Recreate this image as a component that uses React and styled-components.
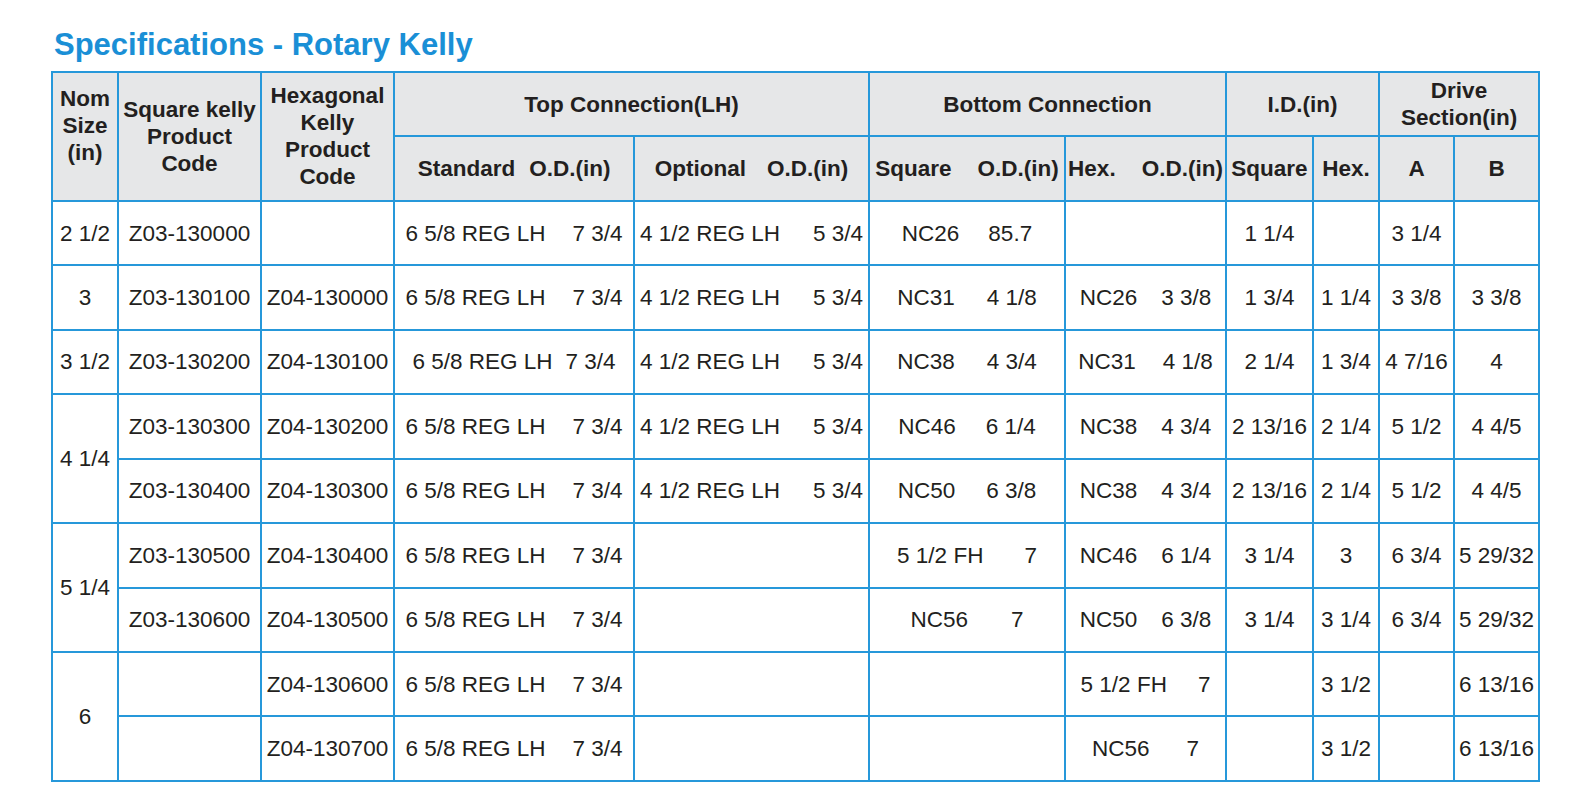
import React from 'react';
import styled, { createGlobalStyle } from 'styled-components';

const GlobalStyle = createGlobalStyle`
  body {
    margin: 0;
    background: #ffffff;
    font-family: "Liberation Sans", Arial, sans-serif;
  }
`;

const rows = [
  { nom: '2 1/2', nomSpan: 1, sq: 'Z03-130000', hex: '', std: ['6 5/8 REG LH', '7 3/4', 27], opt: ['4 1/2 REG LH', '5 3/4', 33], bsq: ['NC26', '85.7', 29], bhex: null, idSq: '1 1/4', idHex: '', a: '3 1/4', b: '' },
  { nom: '3', nomSpan: 1, sq: 'Z03-130100', hex: 'Z04-130000', std: ['6 5/8 REG LH', '7 3/4', 27], opt: ['4 1/2 REG LH', '5 3/4', 33], bsq: ['NC31', '4 1/8', 32], bhex: ['NC26', '3 3/8', 24], idSq: '1 3/4', idHex: '1 1/4', a: '3 3/8', b: '3 3/8' },
  { nom: '3 1/2', nomSpan: 1, sq: 'Z03-130200', hex: 'Z04-130100', std: ['6 5/8 REG LH', '7 3/4', 13], opt: ['4 1/2 REG LH', '5 3/4', 33], bsq: ['NC38', '4 3/4', 32], bhex: ['NC31', '4 1/8', 27], idSq: '2 1/4', idHex: '1 3/4', a: '4 7/16', b: '4' },
  { nom: '4 1/4', nomSpan: 2, sq: 'Z03-130300', hex: 'Z04-130200', std: ['6 5/8 REG LH', '7 3/4', 27], opt: ['4 1/2 REG LH', '5 3/4', 33], bsq: ['NC46', '6 1/4', 30], bhex: ['NC38', '4 3/4', 24], idSq: '2 13/16', idHex: '2 1/4', a: '5 1/2', b: '4 4/5' },
  { sq: 'Z03-130400', hex: 'Z04-130300', std: ['6 5/8 REG LH', '7 3/4', 27], opt: ['4 1/2 REG LH', '5 3/4', 33], bsq: ['NC50', '6 3/8', 31], bhex: ['NC38', '4 3/4', 24], idSq: '2 13/16', idHex: '2 1/4', a: '5 1/2', b: '4 4/5' },
  { nom: '5 1/4', nomSpan: 2, sq: 'Z03-130500', hex: 'Z04-130400', std: ['6 5/8 REG LH', '7 3/4', 27], opt: null, bsq: ['5 1/2 FH', '7', 41], bhex: ['NC46', '6 1/4', 24], idSq: '3 1/4', idHex: '3', a: '6 3/4', b: '5 29/32' },
  { sq: 'Z03-130600', hex: 'Z04-130500', std: ['6 5/8 REG LH', '7 3/4', 27], opt: null, bsq: ['NC56', '7', 43], bhex: ['NC50', '6 3/8', 24], idSq: '3 1/4', idHex: '3 1/4', a: '6 3/4', b: '5 29/32' },
  { nom: '6', nomSpan: 2, sq: '', hex: 'Z04-130600', std: ['6 5/8 REG LH', '7 3/4', 27], opt: null, bsq: null, bhex: ['5 1/2 FH', '7', 31], idSq: '', idHex: '3 1/2', a: '', b: '6 13/16' },
  { sq: '', hex: 'Z04-130700', std: ['6 5/8 REG LH', '7 3/4', 27], opt: null, bsq: null, bhex: ['NC56', '7', 37], idSq: '', idHex: '3 1/2', a: '', b: '6 13/16' },
];

const widths = [66, 143, 133, 240, 235, 196, 161, 87, 66, 75, 85];

function PairCell({ pair }) {
  if (!pair) return <Cell />;
  return (
    <Cell>
      <Pair gap={pair[2]}>
        <span>{pair[0]}</span>
        <span>{pair[1]}</span>
      </Pair>
    </Cell>
  );
}

function App() {
  return (
    <Page>
      <GlobalStyle />
      <Title>Specifications - Rotary Kelly</Title>
      <Table>
        <colgroup>
          {widths.map((w, i) => <col key={i} style={{ width: w }} />)}
        </colgroup>
        <thead>
          <Row>
            <Head rowSpan={2} lift>Nom<br />Size<br />(in)</Head>
            <Head rowSpan={2}>Square kelly<br />Product<br />Code</Head>
            <Head rowSpan={2}>Hexagonal<br />Kelly<br />Product<br />Code</Head>
            <Head colSpan={2}>Top Connection(LH)</Head>
            <Head colSpan={2}>Bottom Connection</Head>
            <Head colSpan={2}>I.D.(in)</Head>
            <Head colSpan={2}>Drive<br />Section(in)</Head>
          </Row>
          <Row>
            <Head><Pair gap={14}><span>Standard</span><span>O.D.(in)</span></Pair></Head>
            <Head><Pair gap={21}><span>Optional</span><span>O.D.(in)</span></Pair></Head>
            <Head><Pair gap={26}><span>Square</span><span>O.D.(in)</span></Pair></Head>
            <Head><Pair gap={26}><span>Hex.</span><span>O.D.(in)</span></Pair></Head>
            <Head>Square</Head>
            <Head>Hex.</Head>
            <Head>A</Head>
            <Head>B</Head>
          </Row>
        </thead>
        <tbody>
          {rows.map((r, i) => (
            <Row key={i}>
              {r.nom && <Cell rowSpan={r.nomSpan}>{r.nom}</Cell>}
              <Cell>{r.sq}</Cell>
              <Cell>{r.hex}</Cell>
              <PairCell pair={r.std} />
              <PairCell pair={r.opt} />
              <PairCell pair={r.bsq} />
              <PairCell pair={r.bhex} />
              <Cell>{r.idSq}</Cell>
              <Cell>{r.idHex}</Cell>
              <Cell>{r.a}</Cell>
              <Cell>{r.b}</Cell>
            </Row>
          ))}
        </tbody>
      </Table>
    </Page>
  );
}

export default App;

const Page = styled.div`
  padding: 29px 0 0 51px;
`;

const Title = styled.h1`
  margin: 0 0 11px 3px;
  font-size: 31px;
  line-height: 31px;
  font-weight: bold;
  color: #1a8fd6;
`;

const Table = styled.table`
  border-collapse: collapse;
  table-layout: fixed;
  width: 1489px;
  color: #231f20;
`;

const Row = styled.tr`
  height: 64.45px;
`;

const Head = styled.th`
  border: 2px solid #2698da;
  background: #e6e7e8;
  padding: 0 0 ${p => (p.lift ? '22px' : '0')} 0;
  font-size: 22.5px;
  line-height: 27px;
  font-weight: bold;
  text-align: center;
  vertical-align: middle;
  white-space: nowrap;
`;

const Cell = styled.td`
  border: 2px solid #2698da;
  padding: 0;
  font-size: 22.5px;
  line-height: 27px;
  text-align: center;
  vertical-align: middle;
  white-space: nowrap;
`;

const Pair = styled.span`
  display: inline-flex;
  gap: ${p => p.gap}px;
`;
